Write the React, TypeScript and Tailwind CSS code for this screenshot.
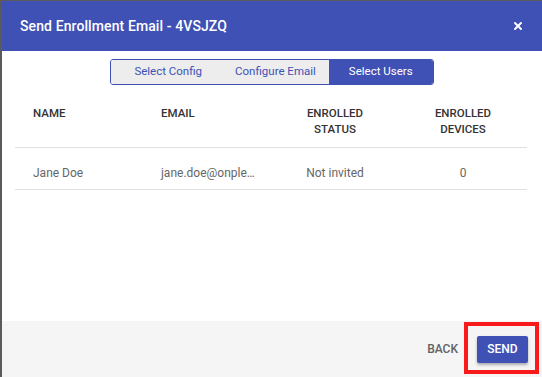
import { X } from "lucide-react"

const users = [
  { name: "Jane Doe", email: "jane.doe@onplexus.com", status: "Not invited", devices: 0 },
]

export default function App() {
  return (
    <div
      className="relative w-[542px] h-[377px] overflow-hidden bg-[#5a5a5a] pl-[2px] pt-[1px]"
      style={{ fontFamily: "Roboto, 'Liberation Sans', sans-serif" }}
    >
      <div className="flex flex-col w-[540px] h-[376px] bg-white">
        {/* Header */}
        <div className="flex items-center justify-between h-[50px] bg-[#3f51b5] pl-[18px] pr-[18px] text-white">
          <h1 className="text-[14px] font-medium tracking-[0.1px]">Send Enrollment Email - 4VSJZQ</h1>
          <X className="h-[12px] w-[12px]" strokeWidth={4} />
        </div>

        {/* Body */}
        <div className="flex-1">
          <div className="flex justify-center mt-[8px]">
            <div className="flex h-[26px] rounded-[3px] border border-[#3f51b5] overflow-hidden text-[11.5px]">
              <button className="pl-[23px] pr-[17px] bg-[#ededed] text-[#3f51b5]">Select Config</button>
              <button className="pl-[16px] pr-[13px] bg-[#ededed] text-[#3f51b5]">Configure Email</button>
              <button className="px-[20px] bg-[#3f51b5] text-white">Select Users</button>
            </div>
          </div>

          <table className="mt-[20px] ml-[13px] w-[512px] table-fixed border-collapse">
            <thead>
              <tr className="border-b border-[#e0e0e0] text-[11.5px] font-medium text-[#333] leading-[16px] align-top">
                <th className="w-[128px] pl-[18px] pb-[10px] text-left font-medium">NAME</th>
                <th className="w-[128px] pl-[18px] pb-[10px] text-left font-medium">EMAIL</th>
                <th className="w-[128px] pb-[10px] text-center font-medium">
                  ENROLLED
                  <br />
                  STATUS
                </th>
                <th className="w-[128px] pb-[10px] text-center font-medium">
                  ENROLLED
                  <br />
                  DEVICES
                </th>
              </tr>
            </thead>
            <tbody>
              {users.map((u) => (
                <tr key={u.email} className="h-[42px] border-b border-[#e0e0e0] text-[12px] text-[#666]">
                  <td className="pl-[18px] pt-[8px]">{u.name}</td>
                  <td className="pl-[18px] pr-[15px] pt-[8px] truncate">{u.email}</td>
                  <td className="pt-[8px] text-center">{u.status}</td>
                  <td className="pt-[8px] text-center">{u.devices}</td>
                </tr>
              ))}
            </tbody>
          </table>
        </div>

        {/* Footer */}
        <div className="flex items-center justify-end gap-[11px] h-[56px] bg-[#f5f5f5] pr-[14px]">
          <button className="px-[8px] text-[12px] font-medium text-[#616161]">BACK</button>
          <button className="h-[27px] w-[51px] rounded-[2px] bg-[#3f51b5] text-[12px] font-medium text-white shadow-[0_2px_3px_rgba(0,0,0,0.3)]">
            SEND
          </button>
        </div>
      </div>

      {/* annotation box */}
      <div className="absolute left-[464px] top-[322px] w-[75px] h-[52px] border-[4px] border-[#f91b1b]" />
    </div>
  )
}
